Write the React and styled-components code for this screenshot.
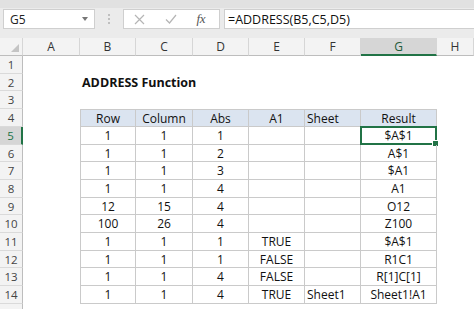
import React from "react";
import styled, { createGlobalStyle } from "styled-components";

const GlobalStyle = createGlobalStyle`
  html, body { margin: 0; padding: 0; background: #fff; }
  body { font-family: "Open Sans", "Liberation Sans", sans-serif; }
`;

const Frame = styled.div`
  width: 474px;
  height: 309px;
  overflow: hidden;
  background: #fff;
  display: flex;
  flex-direction: column;
`;

const TopStrip = styled.div`
  height: 8px;
  background: #e1e1e1;
  flex: none;
`;

const FormulaBar = styled.div`
  flex: none;
  height: 30px;
  background: #ebebeb;
  display: flex;
  align-items: flex-start;
  padding: 1px 0 0 3px;
  box-sizing: border-box;
`;

const Box = styled.div`
  height: 20px;
  background: #fff;
  border: 1px solid #cfcfcf;
  box-sizing: border-box;
  display: flex;
  align-items: center;
  font-size: 12px;
  color: #222;
`;

const NameBox = styled(Box)`
  width: 92px;
  padding: 0 6px 0 6px;
  justify-content: space-between;
`;

const Caret = styled.span`
  width: 0;
  height: 0;
  border-left: 3px solid transparent;
  border-right: 3px solid transparent;
  border-top: 4px solid #777;
`;

const Dots = styled.div`
  width: 28px;
  height: 20px;
  display: flex;
  flex-direction: column;
  align-items: center;
  justify-content: center;
  gap: 2px;
  & > span {
    width: 2px;
    height: 2px;
    background: #b0b0b0;
    border-radius: 1px;
  }
`;

const IconBox = styled(Box)`
  width: 97px;
  padding: 0 10px 0 10px;
  justify-content: space-between;
`;

const Fx = styled.span`
  font-family: "Liberation Serif", "DejaVu Serif", serif;
  font-style: italic;
  font-size: 13px;
  color: #555;
  letter-spacing: -0.5px;
  margin-right: 4px;
`;

const FormulaBox = styled(Box)`
  flex: 1;
  margin-left: 4px;
  padding-left: 3px;
  border-right: none;
  font-size: 12.5px;
  color: #111;
`;

const Sheet = styled.div`
  flex: none;
  display: grid;
  grid-template-columns: 23px 57px 56px 57px 56px 56px 56px 76px 37px;
  grid-template-rows: 18px ${(p) => p.$rows.map((h) => h + "px").join(" ")};
  font-size: 12px;
`;

const Corner = styled.div`
  background: #f3f3f3;
  border-right: 1px solid #d6d6d6;
  border-bottom: 1px solid #bdbdbd;
  box-sizing: border-box;
  position: relative;
  &::after {
    content: "";
    position: absolute;
    right: 3px;
    bottom: 3px;
    width: 0;
    height: 0;
    border-left: 8px solid transparent;
    border-bottom: 8px solid #c4c4c4;
  }
`;

const ColHead = styled.div`
  background: ${(p) => (p.$active ? "#d6d6d6" : "#f3f3f3")};
  border-right: 1px solid #d6d6d6;
  border-bottom: ${(p) => (p.$active ? "2px solid #217346" : "1px solid #bdbdbd")};
  box-sizing: border-box;
  display: flex;
  align-items: center;
  justify-content: center;
  color: ${(p) => (p.$active ? "#1f5c3a" : "#333")};
  font-size: 12px;
`;

const RowHead = styled.div`
  background: ${(p) => (p.$active ? "#d6d6d6" : "#f3f3f3")};
  border-right: ${(p) => (p.$active ? "2px solid #217346" : "1px solid #bdbdbd")};
  border-bottom: 1px solid #dadada;
  box-sizing: border-box;
  display: flex;
  align-items: center;
  justify-content: center;
  color: ${(p) => (p.$active ? "#217346" : "#444")};
  font-size: 11.5px;
`;

const Cell = styled.div`
  box-sizing: border-box;
  position: relative;
  display: flex;
  align-items: center;
  justify-content: ${(p) => (p.$align === "left" ? "flex-start" : "center")};
  padding: ${(p) => (p.$align === "left" ? "0 0 0 2px" : "0")};
  white-space: nowrap;
  color: #111;
  background: ${(p) => (p.$head ? "#dbe4f0" : "transparent")};
  border-right: ${(p) => (p.$table ? "1px solid #cacaca" : "none")};
  border-bottom: ${(p) => (p.$table ? "1px solid #cacaca" : "none")};
  border-left: ${(p) => (p.$first ? "1px solid #cacaca" : "none")};
  border-top: ${(p) => (p.$head ? "1px solid #cacaca" : "none")};
`;

const Title = styled.span`
  font-weight: 700;
  font-size: 12.5px;
  color: #111;
`;

const Selection = styled.div`
  position: absolute;
  left: -1px;
  top: -1px;
  right: -1px;
  bottom: -1px;
  border: 2px solid #217346;
  pointer-events: none;
  &::after {
    content: "";
    position: absolute;
    right: -4px;
    bottom: -4px;
    width: 5px;
    height: 5px;
    background: #217346;
    border: 1px solid #fff;
  }
`;

const COLS = ["A", "B", "C", "D", "E", "F", "G", "H"];
const ROW_HEIGHTS = [18, 17, 18, 18, 18, 17, 18, 18, 17, 18, 18, 17, 18, 18, 18];

const DATA = [
  ["1", "1", "1", "", "", "$A$1"],
  ["1", "1", "2", "", "", "A$1"],
  ["1", "1", "3", "", "", "$A1"],
  ["1", "1", "4", "", "", "A1"],
  ["12", "15", "4", "", "", "O12"],
  ["100", "26", "4", "", "", "Z100"],
  ["1", "1", "1", "TRUE", "", "$A$1"],
  ["1", "1", "1", "FALSE", "", "R1C1"],
  ["1", "1", "4", "FALSE", "", "R[1]C[1]"],
  ["1", "1", "4", "TRUE", "Sheet1", "Sheet1!A1"],
];

const HEADERS = ["Row", "Column", "Abs", "A1", "Sheet", "Result"];

function renderRow(r) {
  const cells = [];
  for (let c = 0; c < 8; c++) {
    const key = `${r}-${c}`;
    const inTable = r >= 4 && r <= 14 && c >= 1 && c <= 6;
    if (r === 2 && c === 1) {
      cells.push(
        <Cell key={key} $align="left">
          <Title>ADDRESS Function</Title>
        </Cell>
      );
    } else if (inTable) {
      const isHead = r === 4;
      const text = isHead ? HEADERS[c - 1] : DATA[r - 5][c - 1];
      const left = c === 5;
      cells.push(
        <Cell key={key} $table $head={isHead} $first={c === 1} $align={left ? "left" : "center"}>
          {text}
          {r === 5 && c === 6 && <Selection />}
        </Cell>
      );
    } else {
      cells.push(<Cell key={key} />);
    }
  }
  return cells;
}

export default function App() {
  return (
    <Frame>
      <GlobalStyle />
      <TopStrip />
      <FormulaBar>
        <NameBox>
          <span>G5</span>
          <Caret />
        </NameBox>
        <Dots>
          <span />
          <span />
          <span />
        </Dots>
        <IconBox>
          <svg width="11" height="11" viewBox="0 0 11 11">
            <path d="M1 1 L10 10 M10 1 L1 10" stroke="#b5b5b5" strokeWidth="1.2" fill="none" />
          </svg>
          <svg width="12" height="10" viewBox="0 0 12 10">
            <path d="M1 5.5 L4.5 9 L11 1" stroke="#b5b5b5" strokeWidth="1.2" fill="none" />
          </svg>
          <Fx>fx</Fx>
        </IconBox>
        <FormulaBox>=ADDRESS(B5,C5,D5)</FormulaBox>
      </FormulaBar>
      <Sheet $rows={ROW_HEIGHTS}>
        <Corner />
        {COLS.map((c) => (
          <ColHead key={c} $active={c === "G"}>
            {c}
          </ColHead>
        ))}
        {ROW_HEIGHTS.map((_, i) => {
          const r = i + 1;
          return (
            <React.Fragment key={r}>
              <RowHead $active={r === 5}>{r <= 14 ? r : ""}</RowHead>
              {renderRow(r)}
            </React.Fragment>
          );
        })}
      </Sheet>
    </Frame>
  );
}
